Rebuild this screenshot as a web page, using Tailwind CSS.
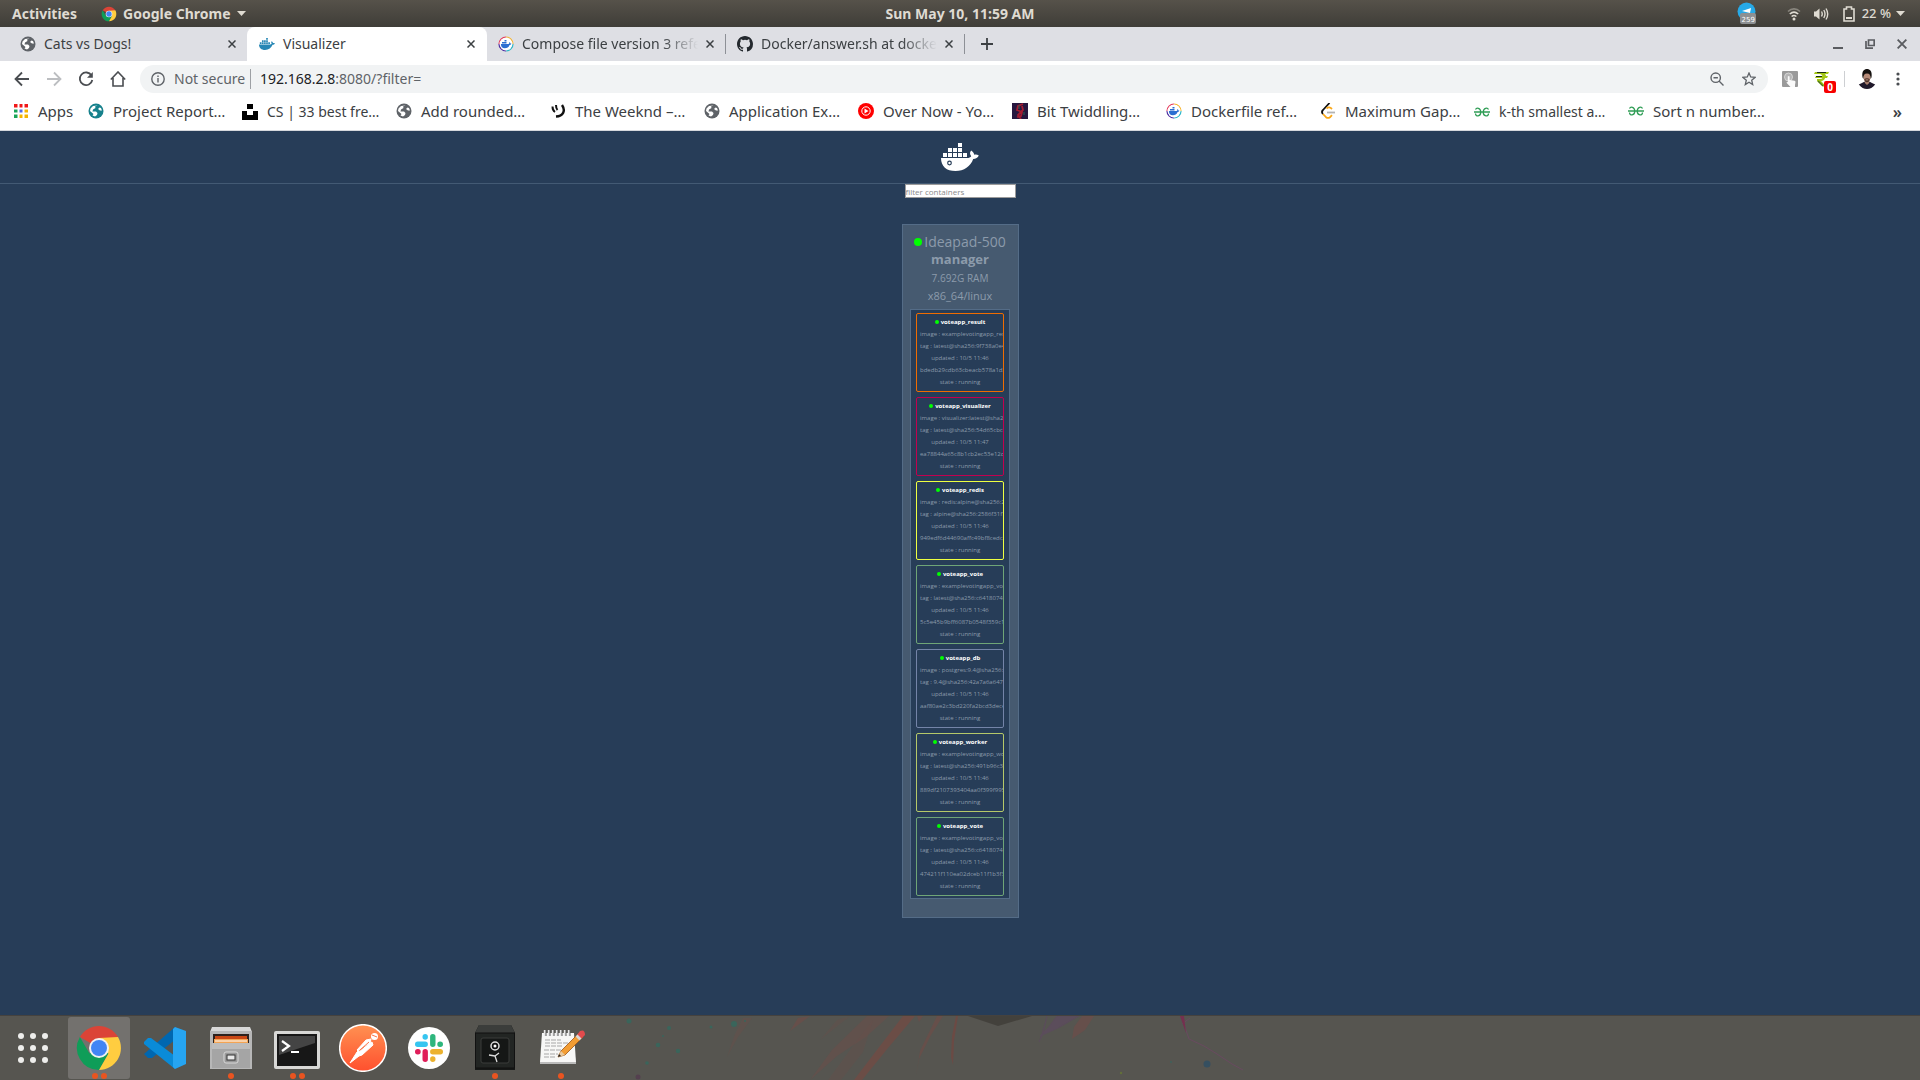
<!DOCTYPE html>
<html lang="en">
<head>
<meta charset="utf-8">
<title>Visualizer</title>
<script src="https://cdn.jsdelivr.net/npm/@tailwindcss/browser@4"></script>
</head>
<body class="min-h-screen flex flex-col bg-[#273d58] font-['Noto_Sans','Open_Sans',sans-serif] text-sm text-[#3c4043]">

<svg class="hidden" aria-hidden="true">
  <symbol id="chrome" viewBox="0 0 48 48">
    <path d="M24 24 4.900 13A22 22 0 0 1 43 13z" fill="#db4437"/>
    <path d="M4.900 13A22 22 0 0 0 24 46l9.500-16.500L24 24 14.500 29.500z" fill="#0f9d58"/>
    <path d="M24 46A22 22 0 0 0 43 13L24 14v10l9.500 5.500z" fill="#ffcd40"/>
    <circle cx="24" cy="24" r="10" fill="#f1f1f1"/><circle cx="24" cy="24" r="8" fill="#4285f4"/>
  </symbol>
  <symbol id="globe" viewBox="0 0 16 16">
    <circle cx="8" cy="8" r="7.500" fill="currentColor"/>
    <path d="M9.500 2.500 7 3.500 7.500 5 5 6.500 4.500 8.500 8 8.500 9.500 10 9 12 7 13.500 4.500 12.500 5.500 11 2 8 2.500 5.500 5 3z" fill="#fff"/>
    <path d="M11.500 4.500 10 6 12 7.500 14 7.500 13 5z" fill="#fff"/>
  </symbol>
  <symbol id="whale" viewBox="0 0 38 28">
    <path d="M17 0h4v4h-4zM7 5h4v4H7zM12 5h4v4h-4zM17 5h4v4h-4zM2 10h4v4H2zM7 10h4v4H7zM12 10h4v4h-4zM17 10h4v4h-4zM22 10h4v4h-4z" fill="currentColor"/>
    <path d="M0 15h26c2 0 3.500-.6 4.200-1.800C28.500 11 28.800 9 30.200 7.600 32 8.800 33 10.200 33.200 11.800c1.600-.4 3.200-.2 4.600.8-1 2.200-3 3.400-5.600 3.400C29.500 23.500 23 28 14.500 28 5.500 28 0 23.500 0 15z" fill="currentColor"/>
  </symbol>
  <symbol id="docs" viewBox="0 0 16 16">
    <path d="M8 1a7 7 0 0 1 7 7" stroke="#f7b32b" fill="none" stroke-width="1.200"/><path d="M15 8a7 7 0 0 1-7 7" stroke="#2bb7c9" fill="none" stroke-width="1.200"/><path d="M8 15a7 7 0 0 1-7-7" stroke="#4a2ba0" fill="none" stroke-width="1.200"/><path d="M1 8a7 7 0 0 1 7-7" stroke="#e5395b" fill="none" stroke-width="1.200"/>
    <circle cx="8" cy="8" r="6.300" fill="#fff"/>
    <path d="M3 8h7.500c.8 0 1-1 .7-2 1 .3 1.200 1 1.200 1.500h1C13 9 12 9 11.600 9 10.800 11.300 9 12.300 6.800 12.300 4 12.300 2.800 10.500 3 8zM4 6h4.500v1.500H4zM6.500 4h2v1.500h-2z" fill="#2c6fd1"/>
  </symbol>
  <symbol id="gfg" viewBox="0 0 16 16">
    <path d="M0 8h16M1.500 5.500C2.500 3.500 6.500 3.500 6.800 8 6.800 13 1.500 13 1.500 9.500M14.500 5.500C13.500 3.500 9.500 3.500 9.200 8c0 5 5.300 5 5.300 1.500" fill="none" stroke="#2f9d55" stroke-width="1.300"/>
  </symbol>
  <symbol id="close" viewBox="0 0 8 8"><path d="M.5.5l7 7M7.500.5l-7 7" stroke="currentColor" stroke-width="1.500"/></symbol>
</svg>

<!-- Desktop top bar -->
<header class="h-[27px] shrink-0 grid grid-cols-3 items-center bg-linear-to-b from-[#56524a] to-[#3f3d38] text-[#dfdbd2] text-sm font-bold">
  <div class="flex items-center pl-3">
    <button>Activities</button>
    <button class="flex items-center gap-[6px] pl-6"><svg class="size-4"><use href="#chrome"/></svg>Google Chrome
      <svg class="w-[9px] h-[5px]" viewBox="0 0 9 5"><path d="M0 0h9L4.500 5z" fill="currentColor"/></svg></button>
  </div>
  <button class="text-center">Sun May 10, 11:59 AM</button>
  <div class="flex items-center justify-end pr-[15px]">
    <svg class="w-5 h-[23px] mr-[30px]" viewBox="0 0 20 23"><circle cx="9.500" cy="9.500" r="9" fill="#27aae8"/><path d="M5 9l9-3-1 5z" fill="#fff"/><rect x="3" y="11" width="16" height="11" rx="2" fill="#8d9093"/><text x="4.500" y="19.500" font-size="7" font-weight="400" font-family="DejaVu Sans" fill="#fff">259</text></svg>
    <svg class="w-[14px] h-[14px] mr-3" viewBox="0 0 14 14" fill="none" stroke="currentColor" stroke-width="1.600"><path d="M1 4.500C4.500 1 9.500 1 13 4.500" opacity=".4"/><path d="M2.800 7C5.500 4.600 8.500 4.600 11.200 7M4.600 9.500c1.600-1.300 3.200-1.300 4.800 0"/><circle cx="7" cy="12" r="1.500" fill="currentColor" stroke="none"/></svg>
    <svg class="w-4 h-[14px] mr-[14px]" viewBox="0 0 16 14"><path d="M1 4.500h2L6.500 1.500v11L3 9.500H1z" fill="currentColor"/><path d="M8.500 4.500q1.500 2.500 0 5M10.800 3q2.400 4 0 8M13 1.500q3.400 5.500 0 11" fill="none" stroke="currentColor" stroke-width="1.400"/></svg>
    <svg class="w-3 h-4 mr-[7px]" viewBox="0 0 12 16"><path d="M3.500 3V1h5v2H11v12H1V3z" fill="none" stroke="currentColor" stroke-width="1.600"/><path d="M3 11h6v2H3z" fill="currentColor"/></svg>
    <span class="mr-[5px] text-[13px] font-medium">22 %</span>
    <svg class="w-[9px] h-[5px]" viewBox="0 0 9 5"><path d="M0 0h9L4.500 5z" fill="currentColor"/></svg>
  </div>
</header>

<!-- Tab strip -->
<nav class="h-[34px] shrink-0 flex items-center bg-[#dedfe4] pl-2">
  <div class="w-[239px] h-full flex items-center pl-3 pr-[11px] gap-2">
    <svg class="size-4 shrink-0 text-[#5f6368]"><use href="#globe"/></svg><span class="flex-1 whitespace-nowrap">Cats vs Dogs!</span>
    <button aria-label="Close tab"><svg class="size-2"><use href="#close"/></svg></button>
  </div>
  <div class="w-[240px] h-full flex items-center px-3 gap-2 bg-white rounded-t-lg">
    <svg class="w-4 h-3 shrink-0 text-[#2787b5]"><use href="#whale"/></svg><span class="flex-1 whitespace-nowrap">Visualizer</span>
    <button aria-label="Close tab"><svg class="size-2"><use href="#close"/></svg></button>
  </div>
  <div class="w-[239px] h-5 flex items-center pl-[11px] pr-[11px] gap-2 border-r border-[#8d9096]">
    <svg class="size-4 shrink-0"><use href="#docs"/></svg><span class="flex-1 whitespace-nowrap overflow-hidden mask-r-from-80% mask-r-to-100%">Compose file version 3 reference</span>
    <button aria-label="Close tab"><svg class="size-2"><use href="#close"/></svg></button>
  </div>
  <div class="w-[239px] h-5 flex items-center pl-[11px] pr-[11px] gap-2 border-r border-[#8d9096]">
    <svg class="size-4 shrink-0" viewBox="0 0 16 16"><path fill="#24292e" d="M8 0C3.580 0 0 3.580 0 8c0 3.540 2.290 6.530 5.470 7.590.4.070.55-.17.55-.38 0-.19-.01-.82-.01-1.490-2.010.37-2.530-.49-2.690-.94-.09-.23-.48-.94-.82-1.130-.28-.15-.68-.52-.01-.53.63-.01 1.080.58 1.230.82.72 1.210 1.870.87 2.330.66.07-.52.28-.87.51-1.070-1.780-.2-3.640-.89-3.640-3.950 0-.87.31-1.590.82-2.150-.08-.2-.36-1.020.08-2.120 0 0 .67-.21 2.200.82a7.600 7.600 0 0 1 4 0c1.530-1.040 2.200-.82 2.200-.82.44 1.100.16 1.920.08 2.120.51.56.82 1.270.82 2.150 0 3.070-1.870 3.750-3.650 3.950.29.25.54.73.54 1.480 0 1.070-.01 1.930-.01 2.200 0 .21.15.46.55.38A8 8 0 0 0 16 8c0-4.420-3.580-8-8-8z"/></svg><span class="flex-1 whitespace-nowrap overflow-hidden mask-r-from-80% mask-r-to-100%">Docker/answer.sh at docker</span>
    <button aria-label="Close tab"><svg class="size-2"><use href="#close"/></svg></button>
  </div>
  <button aria-label="New tab" class="ml-4"><svg class="size-3" viewBox="0 0 12 12"><path d="M6 0v12M0 6h12" stroke="#3c4043" stroke-width="1.800"/></svg></button>
  <div class="ml-auto flex items-center gap-[22px] pr-[13px] text-[#5a5c60]">
    <button aria-label="Minimize"><svg class="size-[10px]" viewBox="0 0 10 10"><path d="M0 9h10" stroke="currentColor" stroke-width="2"/></svg></button>
    <button aria-label="Restore"><svg class="size-[10px]" viewBox="0 0 10 10"><path d="M3.500 1h5.700v5.500H3.500zM1 2v7.200h7" fill="none" stroke="currentColor" stroke-width="1.700"/></svg></button>
    <button aria-label="Close window"><svg class="size-[10px]"><use href="#close"/></svg></button>
  </div>
</nav>

<!-- Toolbar -->
<div class="h-9 shrink-0 flex items-center bg-white text-[#5f6368]">
  <div class="flex items-center gap-4 pl-[14px] pr-[14px]">
    <button aria-label="Back"><svg class="size-4" viewBox="0 0 16 16" fill="none" stroke="#4a4d51" stroke-width="1.800"><path d="M15 8H2M8 1.500 1.500 8 8 14.500"/></svg></button>
    <button aria-label="Forward"><svg class="size-4" viewBox="0 0 16 16" fill="none" stroke="#bcbec1" stroke-width="1.800"><path d="M1 8h13M8 1.500 14.500 8 8 14.500"/></svg></button>
    <button aria-label="Reload"><svg class="size-4" viewBox="0 0 16 16" fill="none" stroke="#4a4d51" stroke-width="1.800"><path d="M13.500 4.500A6.300 6.300 0 1 0 14.300 9"/><path d="M14.800 1v5.800H9z" fill="#4a4d51" stroke="none"/></svg></button>
    <button aria-label="Home"><svg class="size-4" viewBox="0 0 16 16" fill="none" stroke="#4a4d51" stroke-width="1.600"><path d="M.8 8.500 8 1l7.200 7.500M3 7v8h10V7"/></svg></button>
  </div>
  <div class="flex-1 h-7 rounded-full bg-[#f1f3f4] flex items-center pl-[11px] pr-3">
    <svg class="size-[14px] mr-[9px]" viewBox="0 0 14 14" fill="none" stroke="currentColor" stroke-width="1.400"><circle cx="7" cy="7" r="6.200"/><path d="M7 6v4.500M7 3.500V5"/></svg>
    <span class="w-[77px] h-5 border-r border-[#9da0a4] mr-[9px] whitespace-nowrap">Not secure</span>
    <label for="address" class="text-[#202124]">192.168.2.8</label>
    <input id="address" value=":8080/?filter=" class="flex-1 min-w-0 bg-transparent outline-none">
    <button aria-label="Zoom" class="mr-[18px]"><svg class="size-[14px]" viewBox="0 0 14 14" fill="none" stroke="currentColor" stroke-width="1.400"><circle cx="5.700" cy="5.700" r="4.700"/><path d="M9 9l4.500 4.500M3.500 5.700h4.400"/></svg></button>
    <button aria-label="Bookmark"><svg class="size-[14px]" viewBox="0 0 14 14" fill="none" stroke="currentColor" stroke-width="1.300"><path d="M7 1l1.700 4 4.300.4-3.300 2.800 1 4.300L7 10.200l-3.700 2.300 1-4.300L1 5.400 5.300 5z"/></svg></button>
  </div>
  <div class="flex items-center pl-[14px] pr-[20px]">
    <button aria-label="Touch extension" class="mr-4"><svg class="size-4" viewBox="0 0 16 16"><rect width="16" height="16" rx="1" fill="#9a9a9a"/><circle cx="6.500" cy="6" r="4" fill="#b5b5b5" stroke="#d6d6d6"/><path d="M5.800 5.500q.9-1 1.800 0V9l5 .8q1 .3.900 1.200L13 14v2H8.500L4.500 11.800q.3-1 1.300-.6z" fill="#fafafa"/></svg></button>
    <button aria-label="Prices" class="relative mr-[14px]"><svg class="size-4" viewBox="0 0 16 16"><path d="M1 1h14l-1 2h-3q1 1 1 2h2l-1 2h-2q-.5 2.500-4 3l5 5.500H9L3 10V8h3q2 0 2.500-1H1l1-2h6.500Q8 3.500 6 3H0z" fill="#a4c716"/><path d="M3 1.500h9M2 5.500h6" stroke="#1b2e12"/><path d="M4 10l5 5" stroke="#49731b" stroke-width="1.400"/></svg>
      <span class="absolute left-[10px] top-[10px] w-3 h-3 rounded-xs bg-[#f70000] text-white text-[10px] leading-3 font-bold">0</span></button>
    <span class="w-px h-4 bg-[#cdcfd2] mr-[12px]"></span>
    <button aria-label="Profile" class="mr-[19px]"><svg class="size-5" viewBox="0 0 20 22"><path d="M1 17q4-2 6-3h6q2 1 6 3-4 5-9 5t-9-5z" fill="#20192b"/><path d="M7.500 12h5v3.500L10 17.500 7.500 15.500z" fill="#a87e6c"/><ellipse cx="10" cy="8.500" rx="4" ry="5.500" fill="#b78b78"/><path d="M5 9C4 2 7 0 10 0s6 2 5 9l-1 2c0-4-1-6-4-6s-4 2-4 6z" fill="#15110f"/><path d="M7 11q3-1.500 6 0-.5 3.500-3 3.500T7 11z" fill="#4a3129"/><path d="M8.500 12h3" stroke="#c79b88"/></svg></button>
    <button aria-label="Menu"><svg class="w-1 h-4" viewBox="0 0 4 16" fill="#4a4d51"><circle cx="2" cy="3" r="1.600"/><circle cx="2" cy="8" r="1.600"/><circle cx="2" cy="13" r="1.600"/></svg></button>
  </div>
</div>

<!-- Bookmarks bar -->
<nav class="h-[34px] shrink-0 flex items-center bg-white border-b border-[#d5d8dc] pl-[13px] pr-[18px] pb-1 text-[15px] [&_a]:flex [&_a]:items-center [&_a]:gap-[9px] [&_a]:whitespace-nowrap [&_a]:w-[154px] [&_a]:shrink-0 [&_svg]:size-4 [&_svg]:shrink-0">
  <div class="w-[75px] shrink-0"><a href="#"><svg viewBox="0 0 16 16"><path d="M1 1h4v4H1zM6 1h4v4H6zM11 1h4v4h-4z" fill="#f01818"/><path d="M1 6h4v4H1zM1 11h4v4H1z" fill="#18a558"/><path d="M6 6h4v4H6z" fill="#4f6ae8"/><path d="M11 6h4v4h-4zM6 11h4v4H6zM11 11h4v4h-4z" fill="#f4b400"/><path d="M5.500 0v16M10.500 0v16M0 5.500h16M0 10.500h16" stroke="#fff" stroke-width="2"/></svg>Apps</a></div>
  <a href="#"><svg class="text-[#16818c]"><use href="#globe"/></svg>Project Report…</a>
  <a href="#"><svg viewBox="0 0 16 16"><path d="M5 0h6v5H5zM0 7h5v4h6V7h5v9H0z"/></svg><span class="text-sm">CS | 33 best fre…</span></a>
  <a href="#"><svg class="text-[#5f6368]"><use href="#globe"/></svg>Add rounded…</a>
  <a href="#"><svg viewBox="0 0 16 16" fill="none" stroke="#111" stroke-width="2"><path d="M2.500 3.500q0 4 2.500 5.500M6 2q0 3.500 1.500 5"/><path d="M12 2c4 6 1 11-6 11.500" stroke-width="2.400"/></svg>The Weeknd –…</a>
  <a href="#"><svg class="text-[#5f6368]"><use href="#globe"/></svg>Application Ex…</a>
  <a href="#"><svg viewBox="0 0 16 16"><circle cx="8" cy="8" r="8" fill="#f00"/><circle cx="8" cy="8" r="4.200" fill="none" stroke="#fff"/><path d="M6.500 5.500v5L10.500 8z" fill="#fff"/></svg>Over Now - Yo…</a>
  <a href="#"><svg viewBox="0 0 16 16"><rect width="16" height="16" fill="#27173f"/><path d="M11 1 6 3 5 7l5 2-1 4-4 1M10 3l1 4-5 5 3 4" fill="none" stroke="#a51c31" stroke-width="1.800"/><path d="M7 2v4M12 9v3" stroke="#2e6654"/></svg>Bit Twiddling…</a>
  <a href="#"><svg><use href="#docs"/></svg>Dockerfile ref…</a>
  <a href="#"><svg viewBox="0 0 16 16" fill="none" stroke-width="1.800"><path d="M9.500 0 3 7q-2 2 0 4" stroke="#111"/><path d="M12 6Q9 3 6.500 5.500M3 11l3 3.200q2 1.500 4 0l2-2" stroke="#f9a81a"/><path d="M7 9.500h8" stroke="#b3b3b3"/></svg>Maximum Gap…</a>
  <a href="#"><svg><use href="#gfg"/></svg><span class="text-sm">k-th smallest a…</span></a>
  <a href="#"><svg><use href="#gfg"/></svg>Sort n number…</a>
  <button aria-label="More bookmarks" class="ml-auto text-base font-semibold">»</button>
</nav>

<!-- Page -->
<main class="flex-1 flex flex-col items-center bg-[#273d58] font-['Open_Sans',sans-serif] text-[#8c9bab]">
  <div class="w-full h-[53px] border-b border-[#435a74] pt-3 flex justify-center">
    <svg class="w-[38px] h-7 text-white" viewBox="0 0 38 28"><use href="#whale"/><circle cx="8.500" cy="20" r="1.800" fill="none" stroke="#273d58" stroke-width="1.200"/></svg>
  </div>
  <input aria-label="Filter containers" placeholder="filter containers" class="w-[111px] h-[14px] bg-white border border-[#9b9b9b] text-[8px] leading-3 placeholder:text-[#8a8a8a]">
  <section class="mt-[26px] mb-4 w-[117px] h-[694px] border border-[#546c87] bg-[#465a70] px-[7px] pt-2 text-center">
    <div class="text-sm leading-[18px] flex items-center justify-center gap-[2px]"><span class="size-2 rounded-full bg-[#0f0]"></span>Ideapad-500</div>
    <div class="text-[13px] leading-4 pb-[2px] font-bold">manager</div>
    <div class="text-[10px] leading-[18px]">7.692G RAM</div>
    <div class="text-[11px] leading-[18px]">x86_64/linux</div>
    <ul id="tasks" class="mt-1 w-[100px] mx-auto border border-[#546c87] bg-[#273d58] px-[5px] pt-[3px] pb-[2px] flex flex-col gap-[5px]"></ul>
  </section>
</main>
<script>
  const tasks = [
    ['border-[#ef6c00]', 'voteapp_result', 'examplevotingapp_result', 'latest@sha256:9f738a0e4', '11:46', 'bdedb29cdb63cbeacb578a1d3'],
    ['border-[#c2004f]', 'voteapp_visualizer', 'visualizer:latest@sha256', 'latest@sha256:54d65cbc8', '11:47', 'ea78844a65c8b1cb2ec53e12d'],
    ['border-[#eeff41]', 'voteapp_redis', 'redis:alpine@sha256:25', 'alpine@sha256:2586f31f7', '11:46', '949edf6d44690affc49bf8cedc3'],
    ['border-[#6fa577]', 'voteapp_vote', 'examplevotingapp_vote', 'latest@sha256:c6418074f', '11:46', '5c5e45b9bff6087b0548f359c1'],
    ['border-[#7484a8]', 'voteapp_db', 'postgres:9.4@sha256:4', '9.4@sha256:42a7a6a6475', '11:46', 'aaf80ae2c3bd220fa2bcd3dece'],
    ['border-[#b5c869]', 'voteapp_worker', 'examplevotingapp_worker', 'latest@sha256:491b96c36', '11:46', '889df2107393404aa0f399f995'],
    ['border-[#6fa577]', 'voteapp_vote', 'examplevotingapp_vote', 'latest@sha256:c6418074f', '11:46', '474211f110ea02dceb11f1b3f3']
  ];
  document.getElementById('tasks').innerHTML = tasks.map(([edge, name, image, tag, time, id]) => `
    <li class="h-[79px] border rounded-[2px] ${edge} px-[3px] pt-[2px] overflow-hidden text-[6px] leading-3 whitespace-nowrap">
      <div class="flex items-center justify-center gap-[2px] font-bold text-white"><span class="size-1 rounded-full bg-[#0f0]"></span>${name}</div>
      <div>image : ${image}</div><div>tag : ${tag}</div><div>updated : 10/5 ${time}</div><div>${id}</div><div>state : running</div>
    </li>`).join('');
</script>

<!-- Dock -->
<footer class="relative h-[65px] shrink-0 bg-[#565550] border-t border-[#45423e] overflow-hidden">
  <svg class="absolute left-[600px] top-0 w-[660px] h-16" viewBox="0 0 660 64" aria-hidden="true">
    <path d="M368 0h64l-34 10z" fill="#43413c"/>
    <g fill="#6d4d48" opacity=".7"><path d="M143 2h9l-14 19-11 20 8-23z" opacity=".5"/><path d="M267 0h22l-22 20-30 20-27 24 22-30z" opacity=".7"/><path d="M303 0h12l-27 32-26 32h-8l29-38z" fill="#754a43"/><path d="M337 0h6l-12 19-12 24-3 17 4-25z"/><path d="M358 0l-4 25-1 24-2-8 1-21 4-20z" fill="#754640"/><path d="M250 0l-20 16-10 8 17-20zM228 64l25-34 20-26-10 32-22 28z" opacity=".4"/><path d="M210 0l-20 15 8-13zM317 0h6l-4 6z"/><path d="M482 0h12l-9 14-13 9 2-12z"/></g>
    <path d="M457 0h22l-21 12-18 8 8-8zM447 0l-4 18-4 8" fill="#5b4d5b" stroke="#5b4d5b"/>
    <path d="M582 0q2 10 7 23l15 7 13 8 15 10 11 6M590 2l-8 6" fill="none" stroke="#694a60"/><path d="M580 0h4l2 17z" fill="#75304f"/>
    <g fill="#3a655b"><circle cx="29" cy="5" r="2.500"/><circle cx="134" cy="8" r="3"/><circle cx="69" cy="12" r="2"/><circle cx="58" cy="29" r="2.300"/><circle cx="78" cy="35" r="2.200"/><circle cx="47" cy="47" r="1.800"/><circle cx="111" cy="11" r="1.500"/><circle cx="63" cy="20" r="1"/><circle cx="145" cy="5" r="1"/></g>
    <circle cx="38" cy="61" r="2.500" fill="#54404f"/><circle cx="607" cy="48" r="3.500" fill="#354f60"/><circle cx="521" cy="57" r="1.200" fill="#637039"/><circle cx="571" cy="46" r="1" fill="#3f625b"/>
  </svg>
  <div class="relative flex gap-1 pl-[2px] pt-px [&>button]:relative [&>button]:size-[62px] [&>button]:flex [&>button]:items-center [&>button]:justify-center [&_i]:size-[6px] [&_i]:rounded-full [&_i]:bg-[#e95420] [&_span]:absolute [&_span]:bottom-0 [&_span]:inset-x-0 [&_span]:flex [&_span]:justify-center [&_span]:gap-[3px]">
    <button aria-label="Show applications"><svg class="size-[30px]" viewBox="0 0 30 30" fill="#eeeeec"><circle cx="3" cy="3" r="3"/><circle cx="15" cy="3" r="3"/><circle cx="27" cy="3" r="3"/><circle cx="3" cy="15" r="3"/><circle cx="15" cy="15" r="3"/><circle cx="27" cy="15" r="3"/><circle cx="3" cy="27" r="3"/><circle cx="15" cy="27" r="3"/><circle cx="27" cy="27" r="3"/></svg></button>
    <button aria-label="Google Chrome" class="bg-[#73716e] rounded-[3px]"><svg class="size-12"><use href="#chrome"/></svg><span><i></i><i></i></span></button>
    <button aria-label="Visual Studio Code"><svg class="size-[44px]" viewBox="0 0 44 44"><path d="M1 28 5 32 9 32 32 14V1z" fill="#0067b0"/><path d="M1 16l4-4h3l24 18v13L1 18z" fill="#0a8bd8"/><path d="M32 1l11 4v33l-11 5-2-2V3z" fill="#26a5f2"/></svg></button>
    <button aria-label="Files"><svg class="size-12" viewBox="0 0 48 48"><path d="M5 3h38l2 5H3z" fill="#d8d8d8"/><path d="M3 7h42v38H3z" fill="#b7b7b7"/><path d="M6 10h36v12H6z" fill="#2d211d"/><path d="M8 12h32v3H8z" fill="#c94714"/><path d="M7 15h34v6H7z" fill="#f3a454"/><path d="M8 17h32" stroke="#fff" stroke-width="1"/><path d="M5 19h38v25H5z" fill="#a5a5a5"/><path d="M5 19h38v6H5z" fill="#bdbdbd"/><rect x="17" y="28" width="14" height="11" rx="2" fill="#999" stroke="#d8d8d8"/><rect x="20" y="31" width="8" height="5" fill="#e8e8e8" stroke="#333"/></svg><span><i></i></span></button>
    <button aria-label="Terminal"><svg class="w-[46px] h-[38px] mt-1" viewBox="0 0 46 38"><rect width="46" height="38" rx="2" fill="#d8d8d6"/><rect x="3" y="3" width="40" height="32" fill="#171717"/><path d="M5 5h36v7L5 24z" fill="#444"/><path d="M8 10l7 5-7 5M17 21h8" fill="none" stroke="#fff" stroke-width="2.200"/></svg><span><i></i><i></i></span></button>
    <button aria-label="Postman"><svg class="size-12" viewBox="0 0 48 48"><defs><linearGradient id="pm" x2="0" y2="1"><stop stop-color="#ff9152"/><stop offset="1" stop-color="#ff502e"/></linearGradient></defs><circle cx="24" cy="24" r="23.300" fill="url(#pm)" stroke="#fff" stroke-width="1.500"/><circle cx="35.500" cy="12.500" r="3.500" fill="#fff"/><path d="M32 15l-5 1-9 10 2 2 11-9zM33 18l1 3-11 10-3 1-9 7 7-11 7-6z" fill="#fff" stroke="#fff"/><path d="M21 26l9-8M33 11l5 2" stroke="#f9754a"/></svg></button>
    <button aria-label="Slack"><svg class="size-[42px]" viewBox="0 0 42 42"><circle cx="21" cy="21" r="21" fill="#fff"/><g stroke-width="5.400" stroke-linecap="round"><path d="M17.200 9.700v.3M9.700 17.300h7.500" stroke="#36c5f0"/><path d="M24.800 9.700v7.500M32.300 17.300h-.3" stroke="#2eb67d"/><path d="M32.300 24.800h-7.500M24.800 32.300V32" stroke="#ecb22e"/><path d="M17.200 32.300v-7.500M9.700 24.800h.3" stroke="#e01e5a"/></g></svg></button>
    <button aria-label="Safe"><svg class="size-12" viewBox="0 0 48 48"><path d="M8 1h32l4 8v37H4V9z" fill="#161817"/><path d="M8 1h32l4 8H4z" fill="#3b3d3b"/><rect x="4.500" y="9" width="39" height="35" fill="#222523" stroke="#111"/><rect x="10" y="14" width="28" height="25" rx="2" fill="#151716" stroke="#3a3d3a"/><circle cx="24" cy="22" r="4" fill="#111" stroke="#ddd" stroke-width="1.500"/><circle cx="24" cy="22" r="1.500" fill="#fff"/><path d="M24 32l2 6M24 32l-6-1M24 32l4-3" stroke="#ddd" stroke-width="1.300"/></svg><span><i></i></span></button>
    <button aria-label="Text Editor"><svg class="size-12" viewBox="0 0 48 48"><path d="M5 9h32l2 29H3z" fill="#f7f7f6"/><path d="M3 38h36v2H3z" fill="#bbb"/><path d="M8 6v6M12 6v6M16 6v6M20 6v6M24 6v6M28 6v6M32 6v6" stroke="#e8e8e8" stroke-width="2.400"/><path d="M9 6v6M13 6v6M17 6v6M21 6v6M25 6v6M29 6v6M33 6v6" stroke="#333" stroke-width=".8"/><path d="M8 16h16M8 19h24M8 22h18M7 26h17M7 30h14M7 33h11" stroke="#a7a7a7" stroke-dasharray="5 1"/><path d="M21 33l3-6L42 9l4 4-18 18z" fill="#f39d33" stroke="#9c5617" stroke-width=".8"/><path d="M21 33l3-6 4 4z" fill="#e9c99d"/><path d="M21 33l1-3 2 2z" fill="#222"/><path d="M40 11l3-4q5-2 5 4l-4 4z" fill="#e34b4d"/><path d="M38.500 12.500l4 4 2-2-4-4z" fill="#d8d8d8"/></svg><span><i></i></span></button>
  </div>
</footer>
</body>
</html>
